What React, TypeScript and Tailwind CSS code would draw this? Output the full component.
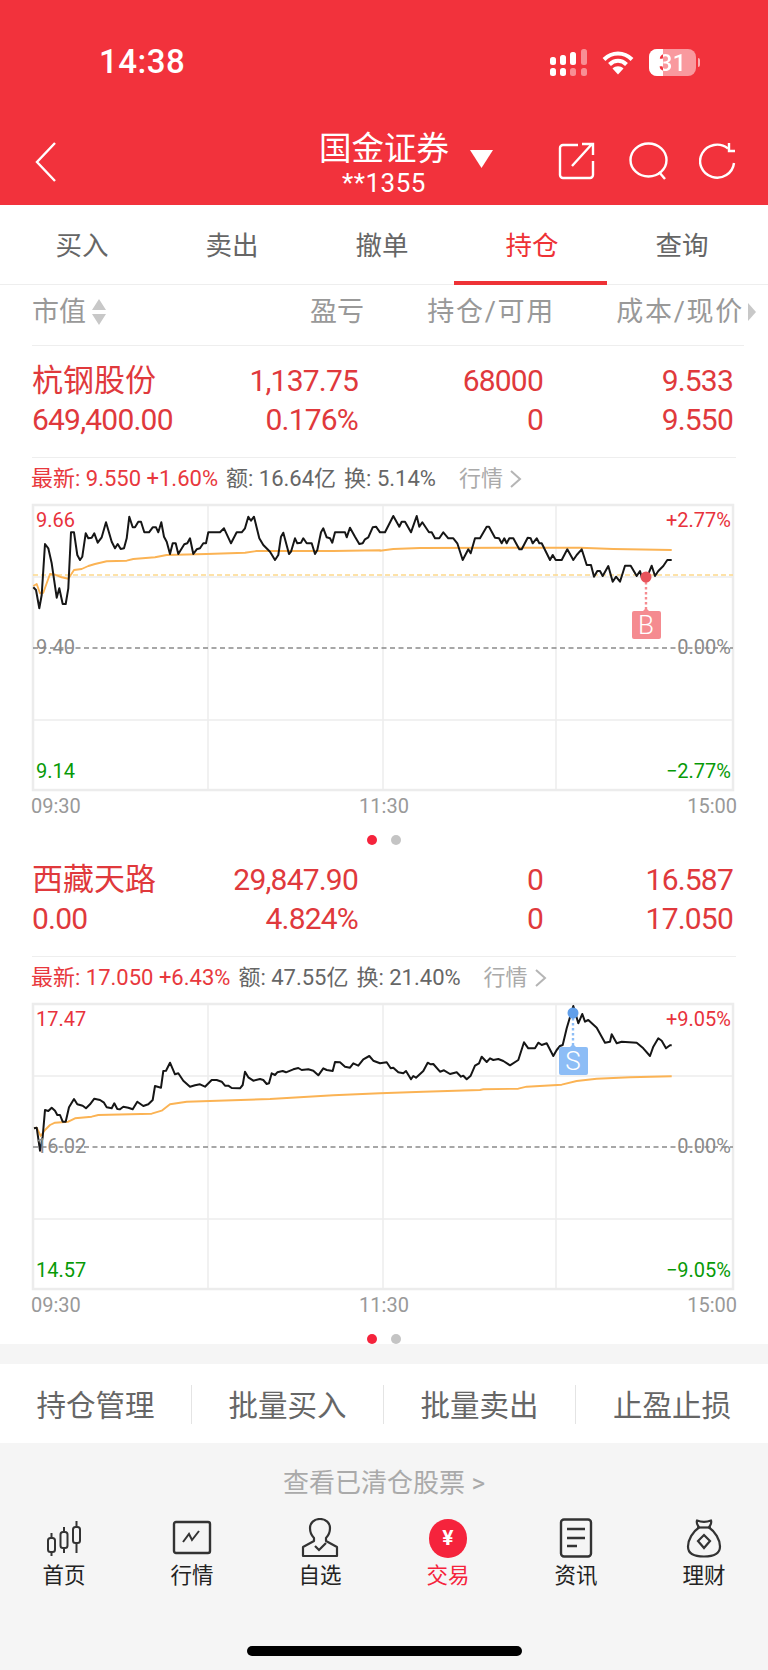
type Pt = [number, number];

// chart traces are read off 3x crops, so every point is (px * 3) with an offset
function toPoints(groups: { ox: number; oy: number; pts: Pt[] }[]) {
  return groups
    .flatMap((g) => g.pts.map(([x, y]) => `${(g.ox + x / 3).toFixed(1)},${(g.oy + y / 3).toFixed(1)}`))
    .join(' ');
}

const price1a: Pt[] = [[100,262],[108,270],[118,325],[125,285],[135,132],[145,145],[155,190],[170,293],[178,265],[188,312],[197,312],[205,265],[213,97],[222,97],[232,165],[240,180],[247,170],[257,100],[265,115],[275,113],[283,100],[293,128],[305,112],[318,67],[335,125],[345,145],[353,132],[362,147],[372,145],[380,115],[388,50],[398,82],[405,82],[415,65],[423,65],[433,97],[447,97],[458,82],[468,82],[475,97],[484,67],[492,110],[500,125],[510,162],[518,130],[527,130],[535,162],[553,133],[562,130],[570,115],[580,162],[590,148],[600,145],[610,130],[618,130],[625,97],[660,97],[672,85],[693,130],[710,97],[725,97],[735,85],[745,50],[753,62],[762,50],[778,115],[790,135],[810,155],[825,180],[835,165],[843,110],[850,98],[867,162],[873,155],[885,115],[892,130],[903,128],[910,115],[920,130],[935,130],[945,162],[952,150],[963,97],[970,85],[980,112],[990,115],[997,128],[1005,97],[1035,97],[1040,112],[1050,83],[1065,110],[1078,132],[1088,130],[1095,118],[1105,112],[1118,82],[1128,80],[1140,97]];
const price1b: Pt[] = [[0,97],[15,97],[40,48],[58,80],[65,65],[75,65],[93,97],[110,48],[118,80],[127,67],[147,97],[155,97],[165,115],[178,115],[190,97],[205,115],[220,115],[232,130],[248,180],[265,148],[272,160],[285,115],[300,115],[320,80],[327,80],[345,113],[357,115],[365,130],[373,115],[380,130],[388,115],[400,115],[418,148],[425,148],[443,113],[452,115],[458,130],[470,115],[478,130],[485,130],[510,180],[518,165],[527,180],[545,180],[562,148],[580,180],[590,165],[605,148],[620,195],[633,195],[642,230],[652,213],[660,213],[668,228],[685,198],[698,245],[708,230],[720,245],[735,197],[752,197],[770,228],[780,213],[785,232],[800,232],[808,215],[815,197],[825,228],[835,213],[850,198],[862,180],[875,180]];
const avg1a: Pt[] = [[100,258],[110,252],[120,280],[130,278],[150,222],[165,224],[185,232],[205,236],[222,210],[245,207],[265,198],[285,192],[320,184],[380,182],[400,177],[465,172],[500,165],[620,162],[735,158],[770,153],[1000,153],[1140,151]];
const avg1b: Pt[] = [[0,152],[40,147],[120,144],[400,143],[600,143],[700,147],[875,150]];

const price2a: Pt[] = [[102,385],[110,383],[120,452],[128,410],[135,330],[145,333],[155,323],[165,332],[172,345],[180,345],[188,365],[197,365],[207,322],[222,297],[232,313],[248,317],[258,325],[270,313],[283,296],[300,300],[312,308],[320,322],[335,325],[343,310],[352,327],[360,328],[370,320],[385,323],[398,328],[412,305],[430,318],[445,313],[458,300],[465,258],[483,263],[490,213],[498,212],[510,188],[525,223],[535,220],[550,242],[570,260],[585,256],[600,253],[615,260],[635,240],[650,240],[665,245],[675,257],[685,257],[695,264],[720,265],[728,255],[735,215],[745,232],[760,242],[780,237],[790,240],[800,252],[807,250],[815,220],[825,225],[832,217],[848,213],[858,217],[880,208],[895,204],[905,210],[925,208],[940,212],[955,226],[970,205],[980,210],[998,213],[1005,186],[1020,187],[1035,200],[1050,203],[1060,190],[1075,197],[1090,178],[1108,168],[1120,182],[1140,190]];
const price2b: Pt[] = [[0,190],[20,187],[32,205],[40,203],[55,217],[70,220],[78,213],[93,238],[100,228],[108,233],[130,213],[143,188],[152,193],[160,192],[180,215],[192,211],[210,222],[230,217],[243,230],[250,227],[260,238],[272,227],[285,197],[297,190],[305,170],[320,186],[330,175],[340,180],[355,177],[370,183],[390,196],[415,180],[432,127],[445,145],[465,145],[475,128],[485,135],[500,130],[520,168],[530,150],[540,138],[548,135],[560,85],[580,18],[595,70],[607,42],[615,65],[625,60],[650,83],[675,128],[690,125],[695,103],[710,130],[725,125],[770,128],[790,145],[810,168],[820,140],[835,115],[845,122],[858,145],[870,136],[875,136]];
const avg2a: Pt[] = [[102,385],[110,383],[122,408],[135,390],[150,375],[165,368],[205,365],[225,355],[275,350],[295,345],[455,341],[485,332],[510,313],[560,305],[810,297],[1000,286],[1140,280]];
const avg2b: Pt[] = [[0,280],[130,275],[300,270],[310,268],[415,266],[440,260],[545,254],[590,243],[650,236],[750,232],[875,229]];

interface Holding {
  name: string;
  value: string;
  pnl: string;
  pnlPct: string;
  qty: string;
  avail: string;
  cost: string;
  price: string;
  latest: string;
  amount: string;
  turnover: string;
  top: number;
  labels: { high: string; mid: string; low: string; up: string; down: string };
  line: { ox: number; oy: number; pts: Pt[] }[];
  avg: { ox: number; oy: number; pts: Pt[] }[];
  costLine?: boolean;
  marker: { kind: 'B' | 'S'; x: number; dotY: number; boxY: number };
}

const holdings: Holding[] = [
  {
    name: '杭钢股份', value: '649,400.00', pnl: '1,137.75', pnlPct: '0.176%', qty: '68000', avail: '0', cost: '9.533', price: '9.550',
    latest: '9.550 +1.60%', amount: '16.64亿', turnover: '5.14%',
    top: 505,
    labels: { high: '9.66', mid: '9.40', low: '9.14', up: '+2.77%', down: '−2.77%' },
    line: [{ ox: 0, oy: 500, pts: price1a }, { ox: 380, oy: 500, pts: price1b }],
    avg: [{ ox: 0, oy: 500, pts: avg1a }, { ox: 380, oy: 500, pts: avg1b }],
    costLine: true,
    marker: { kind: 'B', x: 646, dotY: 577, boxY: 611 },
  },
  {
    name: '西藏天路', value: '0.00', pnl: '29,847.90', pnlPct: '4.824%', qty: '0', avail: '0', cost: '16.587', price: '17.050',
    latest: '17.050 +6.43%', amount: '47.55亿', turnover: '21.40%',
    top: 1004,
    labels: { high: '17.47', mid: '16.02', low: '14.57', up: '+9.05%', down: '−9.05%' },
    line: [{ ox: 0, oy: 1000, pts: price2a }, { ox: 380, oy: 1000, pts: price2b }],
    avg: [{ ox: 0, oy: 1000, pts: avg2a }, { ox: 380, oy: 1000, pts: avg2b }],
    marker: { kind: 'S', x: 573, dotY: 1013, boxY: 1047 },
  },
];

function Chart({ h }: { h: Holding }) {
  const t = h.top;
  const isBuy = h.marker.kind === 'B';
  const dotColor = isBuy ? '#e8535b' : '#619fea';
  const boxColor = isBuy ? '#f58b90' : '#8dbdf6';
  return (
    <div className="relative ml-[32px] h-[285px] w-[702px]">
      <svg className="absolute left-0 top-0 overflow-visible" width="702" height="285" viewBox={`32 ${t} 702 285`} fill="none">
        <rect x="33" y={t} width="700" height="285" stroke="#ececec" strokeWidth="2.5" />
        {[208, 383, 556].map((x) => (
          <line key={x} x1={x} x2={x} y1={t} y2={t + 285} stroke="#ececec" strokeWidth="1.5" />
        ))}
        <line x1="33" x2="733" y1={t + 72} y2={t + 72} stroke="#ececec" strokeWidth="1.5" />
        <line x1="33" x2="733" y1={t + 215} y2={t + 215} stroke="#ececec" strokeWidth="1.5" />
        <line x1="33" x2="733" y1={t + 143} y2={t + 143} stroke="#8a8a8a" strokeWidth="1.6" strokeDasharray="5 3.5" />
        {h.costLine && <line x1="33" x2="733" y1={t + 70} y2={t + 70} stroke="#fdd98c" strokeWidth="1.6" strokeDasharray="5 3" />}
        <polyline points={toPoints(h.avg)} stroke="#fbb354" strokeWidth="1.9" strokeLinejoin="round" />
        <polyline points={toPoints(h.line)} stroke="#161616" strokeWidth="2" strokeLinejoin="round" />
        <line x1={h.marker.x} x2={h.marker.x} y1={h.marker.dotY} y2={h.marker.boxY} stroke={boxColor} strokeWidth="2.4" strokeDasharray="2.4 2.6" />
        <circle cx={h.marker.x} cy={h.marker.dotY} r="5.5" fill={dotColor} />
        <path d={`M${h.marker.x - 4} ${h.marker.boxY + 1}L${h.marker.x} ${h.marker.boxY - 3}L${h.marker.x + 4} ${h.marker.boxY + 1}Z`} fill={boxColor} />
      </svg>

      <span className="absolute left-[4px] top-[3px] text-[20px] leading-[24px] text-[#e8323c]">{h.labels.high}</span>
      <span className="absolute left-[4px] top-[130px] text-[20px] leading-[24px] text-[#8a8a8a]">{h.labels.mid}</span>
      <span className="absolute left-[4px] top-[254px] text-[20px] leading-[24px] text-[#079a07]">{h.labels.low}</span>
      <span className="absolute right-[3px] top-[3px] text-[20px] leading-[24px] text-[#e8323c]">{h.labels.up}</span>
      <span className="absolute right-[3px] top-[130px] text-[20px] leading-[24px] text-[#8a8a8a]">0.00%</span>
      <span className="absolute right-[3px] top-[254px] text-[20px] leading-[24px] text-[#079a07]">{h.labels.down}</span>

      <div
        className={`absolute flex h-[28px] w-[29px] items-center justify-center rounded-[2px] text-[26px] font-light leading-none text-white ${isBuy ? 'bg-[#f58b90]' : 'bg-[#8dbdf6]'}`}
        style={{ left: h.marker.x - 46.5, top: h.marker.boxY - t }}
      >
        {h.marker.kind}
      </div>
    </div>
  );
}

function HoldingBlock({ h }: { h: Holding }) {
  return (
    <section className="h-[499px] bg-white">
      <div className="mx-[32px] h-[112px] border-b border-[#eeeeee] pt-[15px]">
        <div className="grid grid-cols-[160px_166px_185px_190px] text-[30px] leading-[39px] tracking-[-0.8px] text-[#e0393c]">
          <span className="text-[31px] tracking-normal">{h.name}</span>
          <span className="text-right">{h.pnl}</span>
          <span className="text-right">{h.qty}</span>
          <span className="text-right">{h.cost}</span>
          <span>{h.value}</span>
          <span className="text-right">{h.pnlPct}</span>
          <span className="text-right">{h.avail}</span>
          <span className="text-right">{h.price}</span>
        </div>
      </div>
      <div className="flex h-[47px] items-start pl-[31px] pt-[7px] text-[22px] leading-[28px]">
        <span className="text-[#e8383d]">最新: {h.latest}</span>
        <span className="ml-[8px] text-[#666666]">额: {h.amount}</span>
        <span className="ml-[8px] text-[#666666]">换: {h.turnover}</span>
        <span className="ml-[23px] flex items-center text-[#aaaaaa]">
          行情
          <svg width="13" height="20" viewBox="0 0 13 20" fill="none" className="ml-[6px]">
            <path d="M2 2l9 8-9 8" stroke="#b5b5b5" strokeWidth="2" />
          </svg>
        </span>
      </div>
      <Chart h={h} />
      <div className="flex h-[32px] items-center justify-between pl-[31px] pr-[31px] text-[20px] text-[#999999]">
        <span>09:30</span>
        <span>11:30</span>
        <span>15:00</span>
      </div>
      <div className="flex justify-center gap-[14px] pt-[13px]">
        <span className="h-[10px] w-[10px] rounded-full bg-[#f5233c]" />
        <span className="h-[10px] w-[10px] rounded-full bg-[#c4c4c4]" />
      </div>
    </section>
  );
}

function StatusIcons() {
  return (
    <div className="flex items-center">
      <svg width="38" height="27" viewBox="0 0 38 27" fill="white">
        <rect x="0" y="8" width="6" height="8" rx="2.5" />
        <rect x="0" y="19" width="6" height="8" rx="2.5" />
        <rect x="10" y="6" width="6" height="10" rx="2.5" />
        <rect x="10" y="19" width="6" height="8" rx="2.5" />
        <rect x="20" y="3" width="6" height="13" rx="2.5" />
        <rect x="20" y="19" width="6" height="8" rx="2.5" opacity="0.45" />
        <rect x="31" y="0" width="6" height="16" rx="2.5" opacity="0.45" />
        <rect x="31" y="19" width="6" height="8" rx="2.5" opacity="0.45" />
      </svg>
      <svg width="32" height="25" viewBox="0 0 32 25" fill="none" className="ml-[14px]">
        <path d="M2 9.5C10 1.5 22 1.5 30 9.5" stroke="white" strokeWidth="4" />
        <path d="M7.5 14.5C12.5 9.5 19.5 9.5 24.5 14.5" stroke="white" strokeWidth="4" />
        <path d="M16 24.5l-5.5-6c3-3 8-3 11 0z" fill="white" />
      </svg>
      <div className="relative ml-[15px] h-[27px] w-[47px] overflow-hidden rounded-[8px] bg-white/50">
        <div className="h-full w-[14px] bg-white" />
        <span className="absolute inset-0 flex items-center justify-center bg-[linear-gradient(to_right,#f2323c_30%,#ffffff_30%)] bg-clip-text text-[24px] font-medium leading-none text-transparent">
          31
        </span>
      </div>
      <div className="ml-[2px] h-[9px] w-[2px] rounded-r-full bg-white/60" />
    </div>
  );
}

const navItems = [
  {
    label: '首页',
    icon: (
      <g stroke="#333" strokeWidth="2" fill="none">
        <rect x="4" y="20" width="7" height="14" rx="2.5" />
        <path d="M7.5 15v5M7.5 34v4" />
        <rect x="16.5" y="14" width="7" height="16" rx="2.5" />
        <path d="M20 9v5M20 30v5" />
        <rect x="29" y="9" width="7" height="16" rx="2.5" />
        <path d="M32.5 3v6M32.5 25v10" />
      </g>
    ),
  },
  {
    label: '行情',
    icon: (
      <g stroke="#333" fill="none">
        <rect x="2" y="4" width="36" height="31" rx="2" strokeWidth="2.4" />
        <path d="M11 24l6-8 3 6 7-9" strokeWidth="2" />
      </g>
    ),
  },
  {
    label: '自选',
    icon: (
      <g stroke="#333" strokeWidth="2.2" fill="none">
        <path d="M14 20c-2-2-4-5-4-10 0-5 4-9 10-9s10 4 10 9c0 5-2 8-4 10v3l11 6v9H3v-9l11-6z" strokeLinejoin="round" />
        <path d="M15 28l4 4 7-7" />
      </g>
    ),
  },
  { label: '交易', icon: null },
  {
    label: '资讯',
    icon: (
      <g stroke="#333" fill="none">
        <rect x="5" y="1.5" width="30" height="37" rx="3" strokeWidth="2.4" />
        <path d="M11 11h18M11 20h18M11 28h10" strokeWidth="2.4" />
      </g>
    ),
  },
  {
    label: '理财',
    icon: (
      <g stroke="#333" strokeWidth="2.2" fill="none">
        <path d="M13 2.5c4 1.5 10 1.5 14 0 1 3-1 5-2 7 6 4 11 12 11 19 0 7-5 10-16 10s-16-3-16-10c0-7 5-15 11-19-1-2-3-4-2-7z" strokeLinejoin="round" />
        <path d="M13 9.5h14" />
        <path d="M20 17l6 6-6 7-6-7z" />
      </g>
    ),
  },
];

export default function App() {
  return (
    <div className="flex h-[1670px] w-[768px] flex-col overflow-hidden bg-[#f5f5f5] [font-family:Roboto,'Noto_Sans_CJK_SC',sans-serif]">
      {/* status bar + title */}
      <header className="h-[205px] bg-[#f2323c] text-white">
        <div className="flex h-[123px] items-start justify-between pl-[99px] pr-[68px] pt-[44px]">
          <span className="text-[33px] font-medium leading-[36px] tracking-[0.5px]">14:38</span>
          <div className="pt-[5px]"><StatusIcons /></div>
        </div>
        <div className="relative flex h-[82px] justify-between">
          <svg width="24" height="42" viewBox="0 0 24 42" fill="none" stroke="white" strokeWidth="2.4" className="ml-[34px] mt-[18px]">
            <path d="M21 2L3 21l18 19" />
          </svg>
          <div className="absolute left-[319px] top-[8px] flex">
            <div className="flex w-[130px] flex-col items-center">
              <span className="text-[32.5px] leading-[36px]">国金证券</span>
              <span className="pt-[1px] text-[26px] leading-[30px] tracking-[0.5px]">**1355</span>
            </div>
            <svg width="23" height="18" viewBox="0 0 23 18" fill="white" className="ml-[21px] mt-[19px]">
              <path d="M0 0h23L11.5 18z" />
            </svg>
          </div>
          <div className="mr-[31px] mt-[19px] flex">
            <svg width="38" height="38" viewBox="0 0 38 38" fill="none" stroke="white" strokeWidth="2.4">
              <path d="M20 3H5a3 3 0 0 0-3 3v27a3 3 0 0 0 3 3h27a3 3 0 0 0 3-3V19" />
              <path d="M14 24L34 2M24 2h11v11" />
            </svg>
            <svg width="40" height="38" viewBox="0 0 40 38" fill="none" stroke="white" strokeWidth="2.4" className="ml-[33px]">
              <ellipse cx="19.5" cy="18" rx="18" ry="16.5" />
              <path d="M30 30l6 7" />
            </svg>
            <svg width="38" height="38" viewBox="0 0 38 38" fill="none" stroke="white" strokeWidth="2.4" className="ml-[30px]">
              <path d="M35 21a17 16.5 0 1 1-6-14.5" />
              <path d="M30 1v8h6" />
            </svg>
          </div>
        </div>
      </header>

      {/* tabs */}
      <nav className="grid h-[80px] grid-cols-[repeat(5,150px)] border-b border-[#eeeeee] bg-white px-[7px] pt-[3px] text-[26.5px]">
        {['买入', '卖出', '撤单', '持仓', '查询'].map((t) => (
          <div key={t} className={`relative flex items-center justify-center ${t === '持仓' ? 'text-[#ee3236]' : 'text-[#666666]'}`}>
            {t}
            {t === '持仓' && <span className="absolute bottom-[-1px] left-[-3px] h-[4px] w-[153px] bg-[#ee3236]" />}
          </div>
        ))}
      </nav>

      <main className="bg-white">
        {/* column heads */}
        <div className="h-[61px] bg-white pl-[32px]">
          <div className="grid h-full grid-cols-[160px_172px_191px_189px_12px] items-center pb-[7px] text-[27px] text-[#999999]">
            <span className="flex items-center">
              市值
              <svg width="16" height="26" viewBox="0 0 16 26" fill="#c8c8c8" className="ml-[5px]">
                <path d="M8 0l7 11H1zM1 15h14L8 26z" />
              </svg>
            </span>
            <span className="text-right">盈亏</span>
            <span className="text-right tracking-[1.7px]">持仓/可用</span>
            <span className="text-right tracking-[1.7px]">成本/现价</span>
            <span className="flex justify-end">
              <svg width="8" height="18" viewBox="0 0 8 18" fill="#c8c8c8"><path d="M0 0l8 9-8 9z" /></svg>
            </span>
          </div>
          <div className="-mt-px mr-[24px] border-t border-[#eeeeee]" />
        </div>

        {holdings.map((h) => <HoldingBlock key={h.name} h={h} />)}
      </main>

      <div className="h-[20px]" />

      {/* bulk actions */}
      <div className="flex h-[79px] items-center bg-white pt-[2px] text-[29.5px] text-[#666666]">
        {['持仓管理', '批量买入', '批量卖出', '止盈止损'].map((t, i) => (
          <div key={t} className={`flex h-[39px] w-[192px] items-center justify-center ${i < 3 ? 'border-r border-[#e4e4e4]' : ''}`}>
            <span className="pt-[3px]">{t}</span>
          </div>
        ))}
      </div>

      <div className="flex h-[75px] items-center justify-center pt-[6px] text-[26px] text-[#aaaaaa]">查看已清仓股票 &gt;</div>

      {/* bottom nav */}
      <div className="grid grid-cols-6">
        {navItems.map((n) => (
          <div key={n.label} className="flex flex-col items-center">
            {n.icon ? (
              <svg width="40" height="40" viewBox="0 0 40 40">{n.icon}</svg>
            ) : (
              <div className="mt-[1px] flex h-[39px] w-[38px] items-center justify-center rounded-full bg-[#f5233c] text-[21px] font-bold leading-none text-white">¥</div>
            )}
            <span className={`mt-[3px] text-[21.5px] leading-[30px] ${n.icon ? 'text-[#222222]' : 'text-[#f5233c]'}`}>{n.label}</span>
          </div>
        ))}
      </div>

      <div className="mx-auto mt-[55px] h-[10px] w-[275px] rounded-full bg-black" />
    </div>
  );
}
